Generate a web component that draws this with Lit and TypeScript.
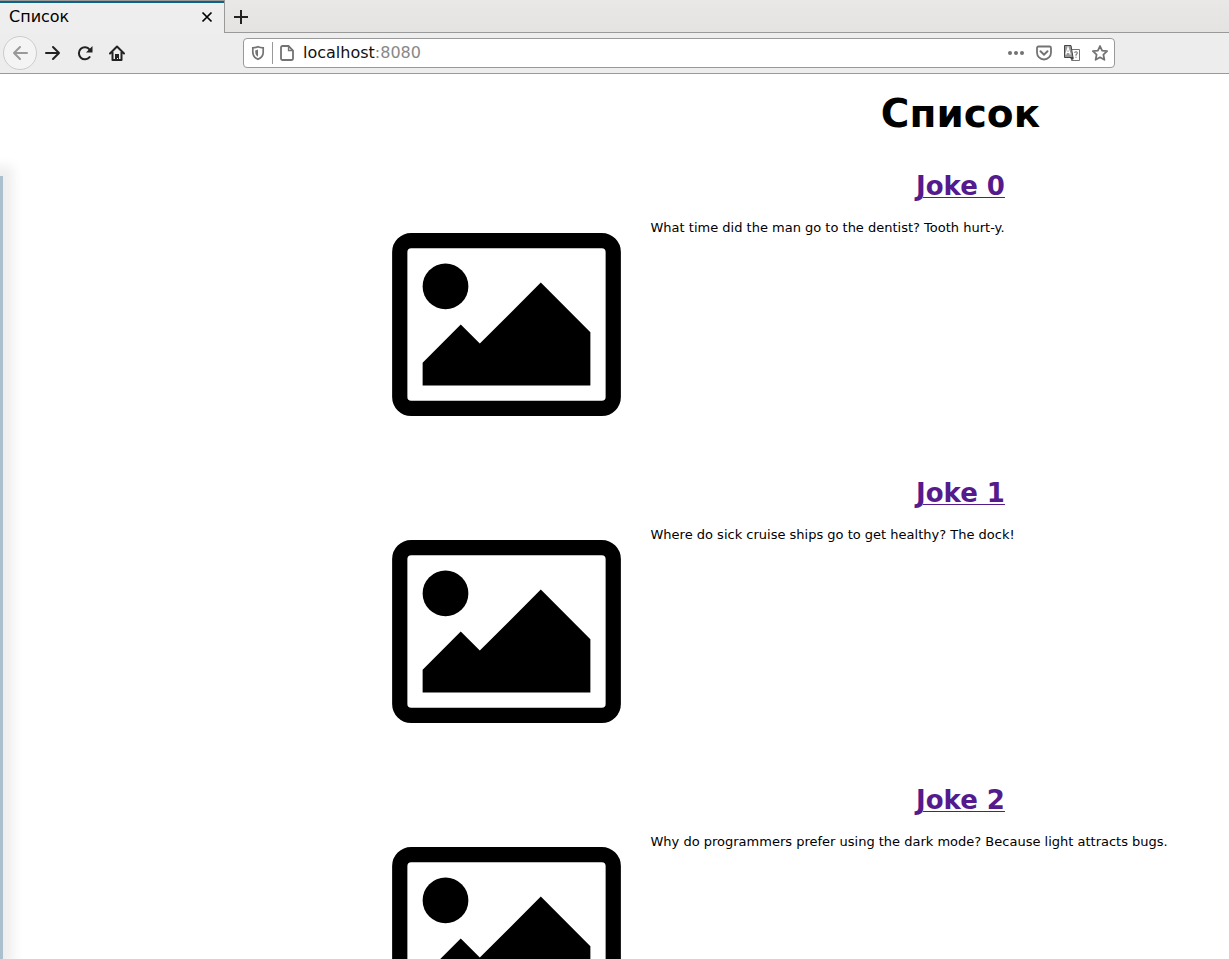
import { LitElement, html, css } from "lit";
import { customElement, property } from "lit/decorators.js";

@customElement("browser-bar")
class BrowserBar extends LitElement {
  static styles = css`
    :host { display: block; color: #222; font: 16px/24px "DejaVu Sans", sans-serif; }
    svg { display: block; fill: none; stroke: currentColor; stroke-width: 2; flex: none; }
    button { border: 0; padding: 0; margin: 0; background: none; color: inherit; font: inherit; display: grid; place-items: center; flex: none; }
    .tabs { display: flex; height: 33px; box-sizing: border-box; background: linear-gradient(#e9e8e6, #e4e3e1); box-shadow: inset 0 -1px #999; }
    .tab { display: flex; align-items: center; justify-content: space-between; width: 225px; box-sizing: border-box; padding: 0 9px; background: #eee; border-top: 1px solid #999; border-right: 1px solid #999; box-shadow: inset 0 2px #0d6286; color: #000; }
    .new { width: 32px; }
    .tools { display: flex; align-items: center; height: 41px; box-sizing: border-box; background: #ededed; border-bottom: 1px solid #999; padding-left: 3px; }
    .tools > button { width: 32px; height: 32px; }
    .tools > .back { width: 34px; height: 34px; box-sizing: border-box; border: 1px solid #ccc; border-radius: 50%; background: #f4f4f4; color: #999; }
    .url { display: flex; align-items: center; flex: 1; height: 30px; box-sizing: border-box; margin: 0 114px 0 110px; padding: 0 6px; background: #fff; border: 1px solid #999; border-radius: 4px; color: #737373; }
    .sep { width: 1px; height: 22px; background: #999; margin: 0 6px; }
    .address { flex: 1; margin-left: 8px; color: #888; }
    .host { color: #111; }
    .actions { display: flex; gap: 12px; }
    .glyph { fill: currentColor; stroke: none; }
  `;
  render() {
    return html`
      <div class="tabs" role="tablist">
        <div class="tab" role="tab" aria-selected="true">
          <span>Список</span>
          <button aria-label="Close tab"><svg width="16" height="16"><path d="M3.5 3.5l9 9m0-9l-9 9" stroke-width="1.7" /></svg></button>
        </div>
        <button class="new" aria-label="New tab"><svg width="16" height="16"><path d="M8 1v14M1 8h14" /></svg></button>
      </div>
      <div class="tools">
        <button class="back" aria-label="Back"><svg width="16" height="16"><path d="M15 8H2M8 2L2 8l6 6" stroke-linecap="round" stroke-linejoin="round" /></svg></button>
        <button aria-label="Forward"><svg width="16" height="16"><path d="M1 8h13M8 2l6 6-6 6" stroke-linecap="round" stroke-linejoin="round" /></svg></button>
        <button aria-label="Reload"><svg width="16" height="16"><path d="M12.600 12A6 6 0 1 1 12.600 4.500" stroke-linecap="round" /><path class="glyph" d="M15.500 1v6.500H9z" /></svg></button>
        <button aria-label="Home"><svg width="16" height="16"><path d="M1 8.500l7-7 7 7M3.500 7v8h9V7" stroke-linecap="round" stroke-linejoin="round" /><path class="glyph" d="M6 15V9h4v6H9v-2H8v2z" /></svg></button>
        <div class="url">
          <button aria-label="Tracking protection"><svg width="16" height="16"><path d="M8 1.800c2 .9 3.500 1 5.200 1v4.500c0 3.500-2 5.700-5.200 7-3.200-1.300-5.200-3.500-5.200-7V2.800c1.700 0 3.200-.1 5.200-1z" stroke-width="1.700" /><path class="glyph" d="M8 4.500v7.200C6 10.500 5.300 9 5.300 7.200V5.300C6.500 5.200 7 5 8 4.500z" /></svg></button>
          <span class="sep"></span>
          <button aria-label="Site information"><svg width="16" height="16"><path d="M3.500 1h6l4.500 4.500v8A1.500 1.500 0 0 1 12.500 15h-9A1.500 1.500 0 0 1 2 13.500v-11A1.500 1.500 0 0 1 3.500 1z" stroke-width="1.800" /><path d="M9.500 1v4.500H14" stroke-width="1.300" /></svg></button>
          <span class="address"><span class="host">localhost</span>:8080</span>
          <div class="actions">
            <button aria-label="Page actions"><svg class="glyph" width="16" height="16"><circle cx="2" cy="8" r="2" /><circle cx="8" cy="8" r="2" /><circle cx="14" cy="8" r="2" /></svg></button>
            <button aria-label="Save to Pocket"><svg width="16" height="16"><path d="M2.500 1.500h11A1.500 1.500 0 0 1 15 3v4.500A7 7 0 0 1 1 7.500V3a1.500 1.500 0 0 1 1.500-1.500z" stroke-width="1.800" /><path d="M4.500 6.300L8 9.700l3.500-3.400" stroke-linecap="round" /></svg></button>
            <button aria-label="Translate page"><svg width="16" height="16"><path d="M8 4.500h7.500v11h-8v-3" stroke-width="1" /><path d="M.5.500h6.500l2 12H.5z" fill="#999" stroke="#444" stroke-width="1" /><path d="M1.800 9.500L4 2.500l2.300 7M2.600 7.300h3" stroke="#fff" stroke-width="1.200" /><path d="M5 12.500h5l-1 2.500z" fill="#444" stroke="none" /><path d="M10.700 8q0-1.300 1.300-1.300t1.300 1.300q0 .8-1.300 1.700v1m0 1v1" stroke-width="1.100" /></svg></button>
            <button aria-label="Bookmark"><svg width="16" height="16"><path d="M8 1l2.100 4.600 5 .6-3.700 3.500 1 5.100L8 12.300l-4.400 2.500 1-5.100L.9 6.200l5-.6z" stroke-width="1.800" stroke-linejoin="round" /></svg></button>
          </div>
        </div>
      </div>
    `;
  }
}

@customElement("joke-card")
class JokeCard extends LitElement {
  @property() heading = "";
  @property() text = "";
  static styles = css`
    :host { display: block; padding-bottom: 62px; }
    h2 { margin: 0; font-size: 26px; line-height: 30px; text-align: center; }
    a { color: #551a8b; text-decoration-thickness: 1px; text-underline-offset: 2px; }
    .body { display: grid; grid-template-columns: 229px 1fr; column-gap: 30px; margin-top: 19px; }
    svg { display: block; width: 100%; height: 183px; margin-top: 13px; }
    p { margin: 0; font-size: 13px; line-height: 16px; }
  `;
  render() {
    return html`
      <h2><a href="#">${this.heading}</a></h2>
      <div class="body">
        <svg viewBox="0 0 15 12" role="img" aria-label="Picture">
          <rect x=".5" y=".5" width="14" height="11" rx=".75" fill="none" stroke="#000" />
          <circle cx="3.500" cy="3.500" r="1.500" />
          <path d="M2 10V8.500L4.500 6l1.250 1.250 4-4L13 6.500V10z" />
        </svg>
        <p>${this.text}</p>
      </div>
    `;
  }
}

@customElement("app-root")
class AppRoot extends LitElement {
  private jokes = [
    "What time did the man go to the dentist? Tooth hurt-y.",
    "Where do sick cruise ships go to get healthy? The dock!",
    "Why do programmers prefer using the dark mode? Because light attracts bugs.",
  ];
  static styles = css`
    :host { display: flex; flex-direction: column; height: 100vh; overflow: hidden; background: #fff; color: #000; font-family: "DejaVu Sans", sans-serif; }
    browser-bar { flex: none; }
    .view { position: relative; flex: 1; min-height: 0; overflow: hidden; }
    .drawer { position: absolute; left: 0; top: 102px; bottom: 0; width: 3px; background: #abc0ce; box-shadow: 0 0 12px 10px #eee; }
    .page { width: 1921px; }
    h1 { margin: 0; padding: 17px 0 34px; font-size: 39px; line-height: 46px; text-align: center; }
    .list { width: 1138px; margin: 0 auto; }
  `;
  render() {
    return html`
      <browser-bar></browser-bar>
      <div class="view">
        <aside class="drawer"></aside>
        <main class="page">
          <h1>Список</h1>
          <div class="list">
            ${this.jokes.map((t, i) => html`<joke-card heading="Joke ${i}" text=${t}></joke-card>`)}
          </div>
        </main>
      </div>
    `;
  }
}
